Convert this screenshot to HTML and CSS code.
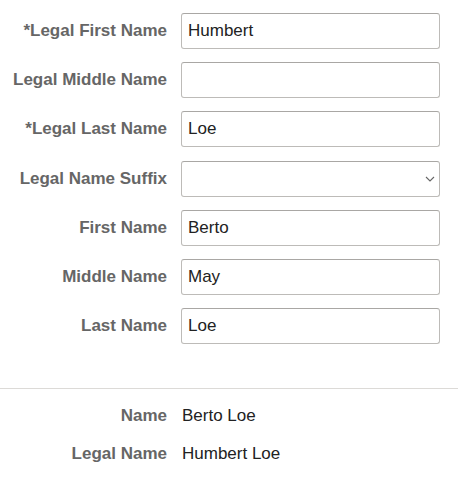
FILE: index.html
```html
<!DOCTYPE html>
<html>
<head>
<meta charset="utf-8">
<link rel="stylesheet" href="styles.css">
</head>
<body>
<form class="form">
  <label class="label" for="f1">*Legal First Name</label>
  <input class="field" id="f1" type="text" value="Humbert">
  <label class="label" for="f2">Legal Middle Name</label>
  <input class="field" id="f2" type="text" value="">
  <label class="label" for="f3">*Legal Last Name</label>
  <input class="field" id="f3" type="text" value="Loe">
  <label class="label" for="f4">Legal Name Suffix</label>
  <div class="select">
    <span class="select-value"></span>
    <svg class="chevron" width="10" height="6" viewBox="0 0 10 6"><path d="M1 1 L5 5 L9 1" fill="none" stroke="#666" stroke-width="1.1"/></svg>
  </div>
  <label class="label" for="f5">First Name</label>
  <input class="field" id="f5" type="text" value="Berto">
  <label class="label" for="f6">Middle Name</label>
  <input class="field" id="f6" type="text" value="May">
  <label class="label" for="f7">Last Name</label>
  <input class="field" id="f7" type="text" value="Loe">
</form>
<hr class="divider">
<dl class="summary">
  <dt class="label">Name</dt>
  <dd class="value">Berto Loe</dd>
  <dt class="label">Legal Name</dt>
  <dd class="value">Humbert Loe</dd>
</dl>
</body>
</html>
```
FILE: styles.css
```css
html, body {
  margin: 0;
  padding: 0;
  background: #fff;
  font-family: "Liberation Sans", Arial, sans-serif;
}
.form {
  display: grid;
  grid-template-columns: 167px 259px;
  column-gap: 14px;
  row-gap: 13.2px;
  padding-top: 13px;
  align-items: center;
}
.label {
  text-align: right;
  font-weight: bold;
  font-size: 17px;
  color: #666;
  white-space: nowrap;
}
.field, .select {
  box-sizing: border-box;
  height: 36px;
  width: 259px;
  border: 1px solid #bdbbb8;
  border-top-color: #a9a7a4;
  border-radius: 3px;
  background: #fff;
  font-family: "Liberation Sans", Arial, sans-serif;
  font-size: 17px;
  color: #222;
  padding: 0 6px;
  margin: 0;
  outline: none;
}
.select {
  display: flex;
  align-items: center;
  justify-content: flex-end;
  padding-right: 4px;
}
.chevron {
  display: block;
}
.divider {
  margin: 44px 0 0 0;
  border: 0;
  border-top: 1px solid #dcdad7;
  height: 0;
}
.summary {
  display: grid;
  grid-template-columns: 167px auto;
  column-gap: 15px;
  row-gap: 18px;
  margin: 17px 0 0 0;
  align-items: center;
}
.summary dd {
  margin: 0;
}
.value {
  font-size: 17px;
  color: #222;
}
```
